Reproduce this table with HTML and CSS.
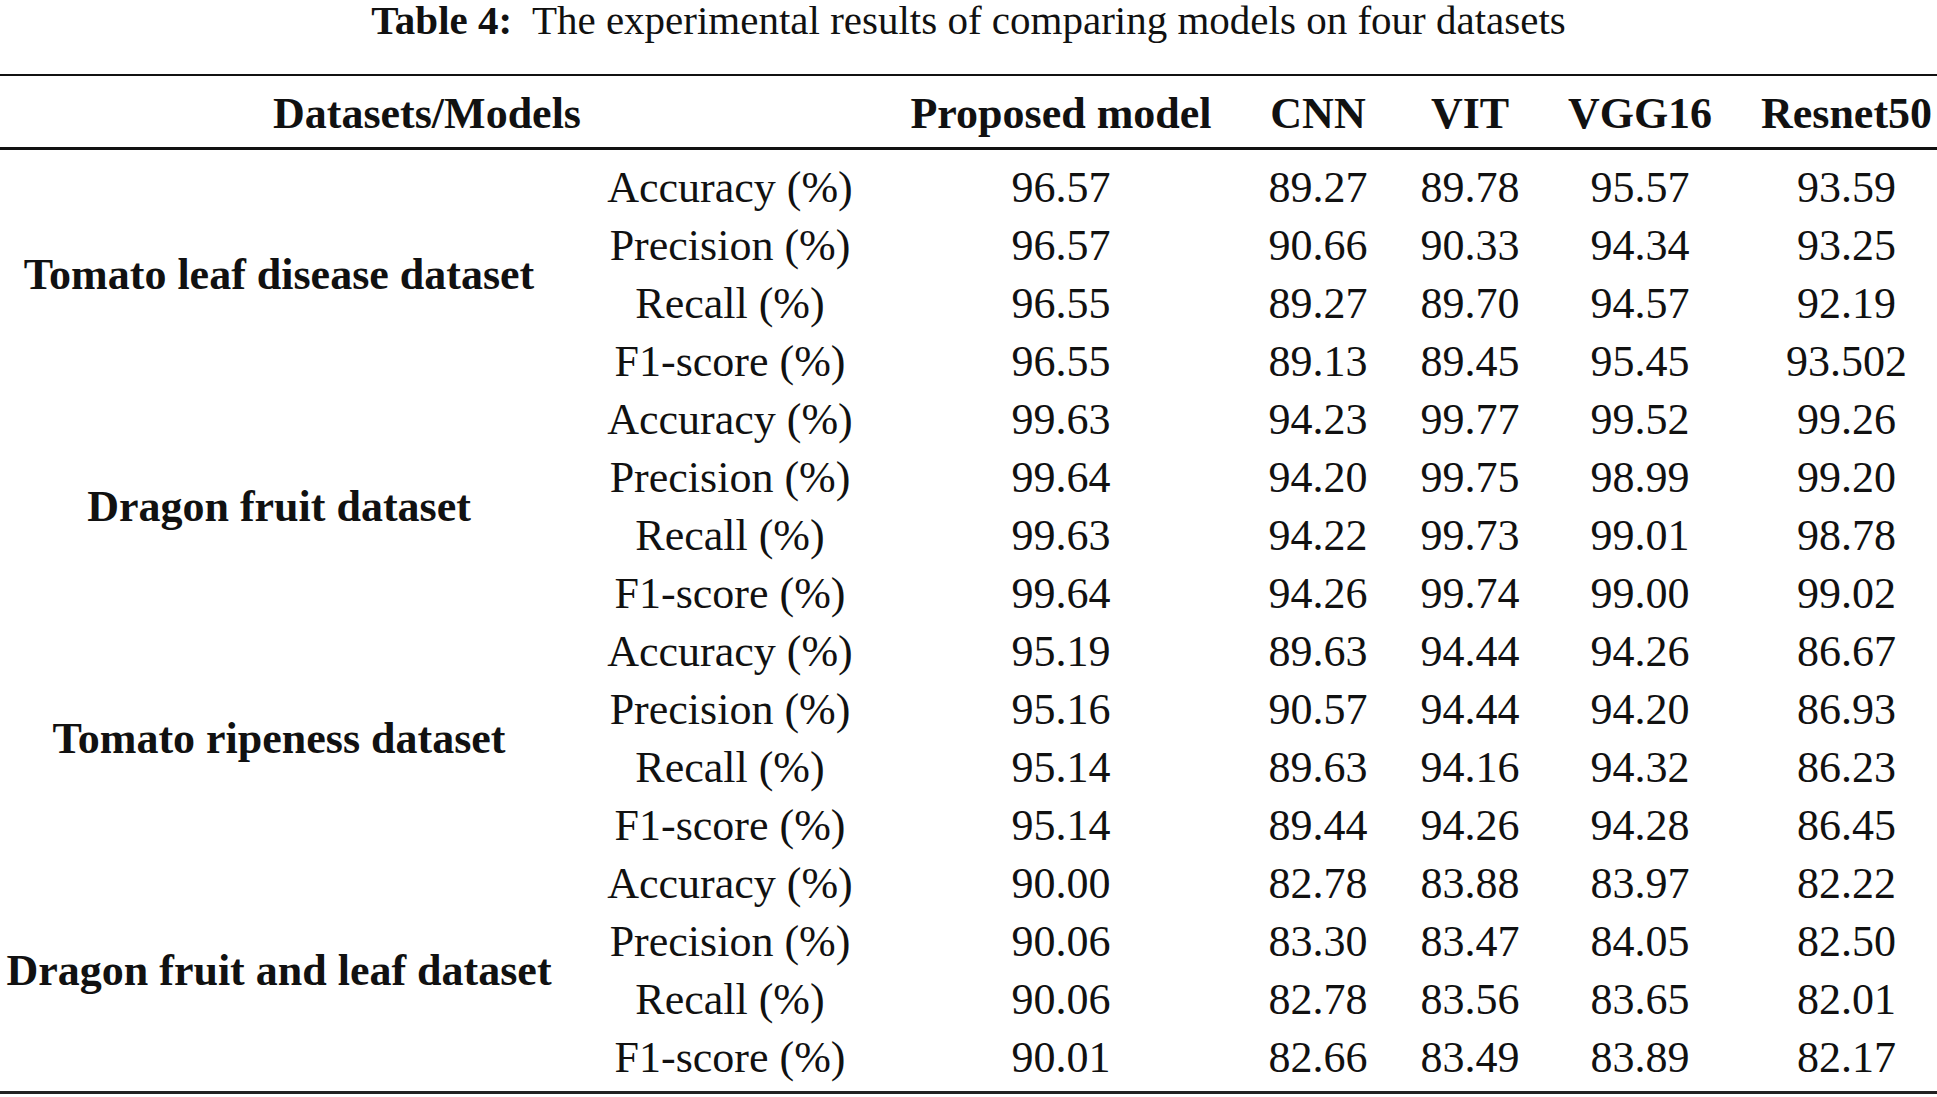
FILE: index.html
```html
<!DOCTYPE html>
<html lang="en">
<head>
<meta charset="utf-8">
<title>Table 4</title>
<link rel="stylesheet" href="styles.css">
</head>
<body>
<div class="caption"><b>Table 4:</b>&nbsp; The experimental results of comparing models on four datasets</div>
<div class="table">
  <div class="head">
    <div class="hcell span2">Datasets/Models</div>
    <div class="hcell">Proposed model</div>
    <div class="hcell">CNN</div>
    <div class="hcell">VIT</div>
    <div class="hcell">VGG16</div>
    <div class="hcell">Resnet50</div>
  </div>
  <div class="body">
    <div class="ds">Tomato leaf disease dataset</div>
    <div>Accuracy (%)</div><div>96.57</div><div>89.27</div><div>89.78</div><div>95.57</div><div>93.59</div>
    <div>Precision (%)</div><div>96.57</div><div>90.66</div><div>90.33</div><div>94.34</div><div>93.25</div>
    <div>Recall (%)</div><div>96.55</div><div>89.27</div><div>89.70</div><div>94.57</div><div>92.19</div>
    <div>F1-score (%)</div><div>96.55</div><div>89.13</div><div>89.45</div><div>95.45</div><div>93.502</div>

    <div class="ds">Dragon fruit dataset</div>
    <div>Accuracy (%)</div><div>99.63</div><div>94.23</div><div>99.77</div><div>99.52</div><div>99.26</div>
    <div>Precision (%)</div><div>99.64</div><div>94.20</div><div>99.75</div><div>98.99</div><div>99.20</div>
    <div>Recall (%)</div><div>99.63</div><div>94.22</div><div>99.73</div><div>99.01</div><div>98.78</div>
    <div>F1-score (%)</div><div>99.64</div><div>94.26</div><div>99.74</div><div>99.00</div><div>99.02</div>

    <div class="ds">Tomato ripeness dataset</div>
    <div>Accuracy (%)</div><div>95.19</div><div>89.63</div><div>94.44</div><div>94.26</div><div>86.67</div>
    <div>Precision (%)</div><div>95.16</div><div>90.57</div><div>94.44</div><div>94.20</div><div>86.93</div>
    <div>Recall (%)</div><div>95.14</div><div>89.63</div><div>94.16</div><div>94.32</div><div>86.23</div>
    <div>F1-score (%)</div><div>95.14</div><div>89.44</div><div>94.26</div><div>94.28</div><div>86.45</div>

    <div class="ds">Dragon fruit and leaf dataset</div>
    <div>Accuracy (%)</div><div>90.00</div><div>82.78</div><div>83.88</div><div>83.97</div><div>82.22</div>
    <div>Precision (%)</div><div>90.06</div><div>83.30</div><div>83.47</div><div>84.05</div><div>82.50</div>
    <div>Recall (%)</div><div>90.06</div><div>82.78</div><div>83.56</div><div>83.65</div><div>82.01</div>
    <div>F1-score (%)</div><div>90.01</div><div>82.66</div><div>83.49</div><div>83.89</div><div>82.17</div>
  </div>
</div>
</body>
</html>
```

FILE: styles.css
```css
html, body {
  margin: 0;
  padding: 0;
  background: #fff;
}
body {
  font-family: "Liberation Serif", "Times New Roman", serif;
  color: #111;
  width: 1937px;
}
.caption {
  font-size: 41px;
  line-height: 40px;
  height: 40px;
  text-align: center;
  margin-bottom: 34px;
  white-space: nowrap;
}
.caption b {
  font-weight: bold;
}
.table {
  border-top: 2px solid #111;
  border-bottom: 3px solid #222;
}
.head,
.body {
  display: grid;
  grid-template-columns: 558px 344px 318px 196px 108px 232px 181px;
  font-size: 44px;
  text-align: center;
  white-space: nowrap;
}
.head {
  height: 71px;
  line-height: 75px;
  font-weight: bold;
  border-bottom: 3px solid #111;
}
.span2 {
  grid-column: span 2;
  padding-right: 48px;
}
.body {
  grid-auto-rows: 58px;
  line-height: 58px;
  padding: 9px 0 4px;
}
.ds {
  grid-row: span 4;
  font-weight: bold;
  display: flex;
  align-items: center;
  justify-content: center;
}
```
